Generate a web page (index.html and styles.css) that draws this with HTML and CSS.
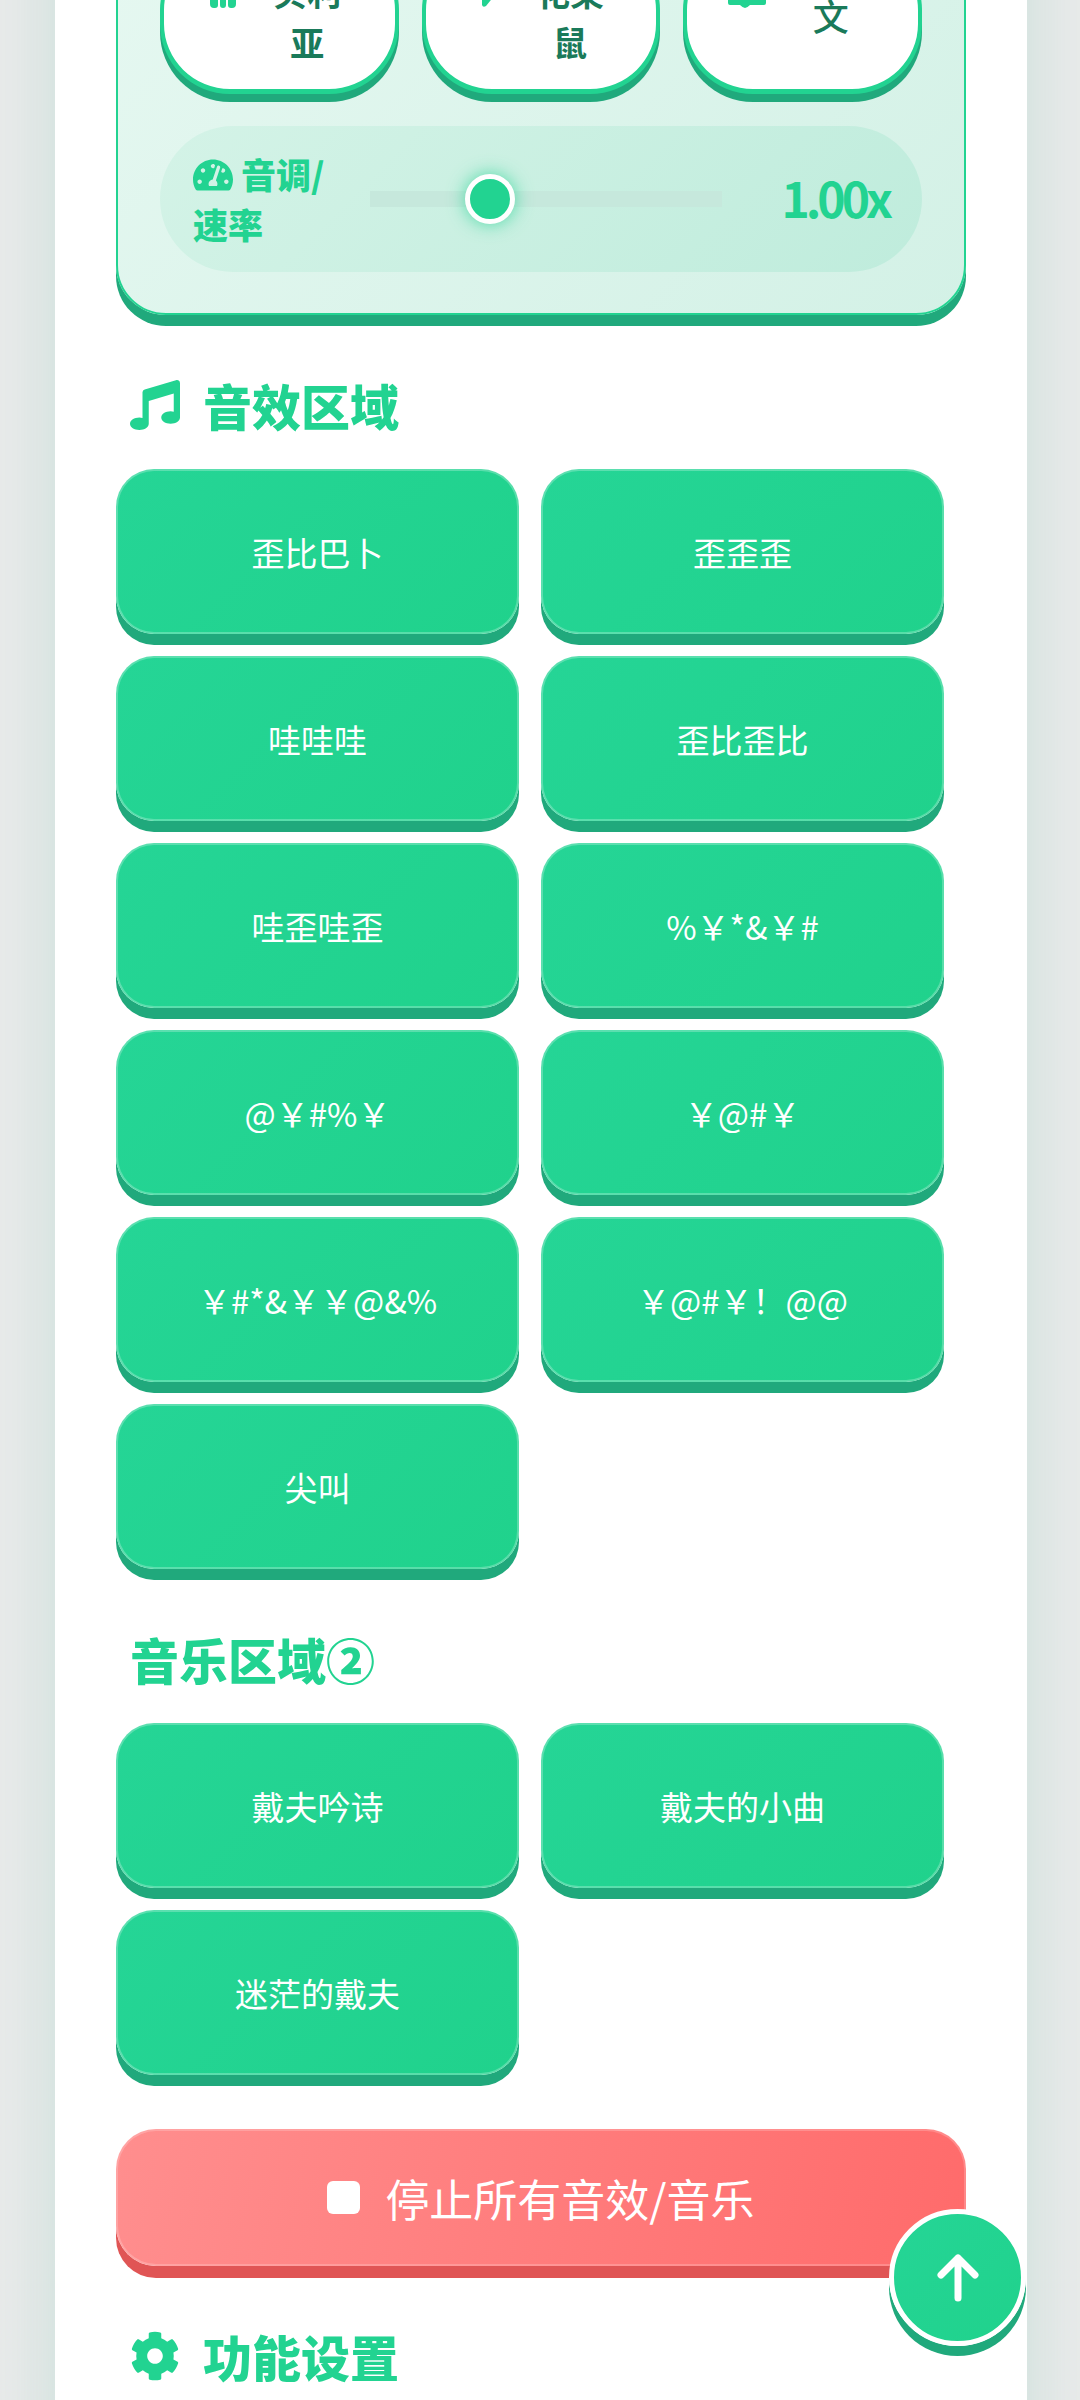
FILE: index.html
```html
<!DOCTYPE html>
<html lang="zh-CN">

<head>
  <meta charset="UTF-8">
  <meta name="viewport" content="width=device-width, initial-scale=1.0">
  <title>音效板</title>
  <link rel="stylesheet" href="styles.css">
</head>

<body>
  <div class="app">
    <div class="voice-panel">
      <div class="voices">
        <div class="voice-tile voice-tile-a">
          <svg class="voice-icon voice-icon-a" viewBox="0 0 26 34"><path d="M0 4h26v26q0 4-4 4h-1q-3 0-3-3v-7h-2v7q0 3-3 3t-3-3v-7H8v7q0 3-3 3H4q-4 0-4-4z" /></svg>
          <span class="voice-name">贝利亚</span>
        </div>
        <div class="voice-tile voice-tile-b">
          <svg class="voice-icon voice-icon-b" viewBox="0 0 30 34"><path d="M0 0h30L4 32q-3 2-4-1z" /></svg>
          <span class="voice-name">花栗鼠</span>
        </div>
        <div class="voice-tile voice-tile-c">
          <svg class="voice-icon voice-icon-c" viewBox="0 0 38 34"><path d="M0 0h38v29q0 2-2 2H22q-3 3-5 3t-5-3H2q-2 0-2-2z" /></svg>
          <span class="voice-name voice-name-thin">文</span>
        </div>
      </div>
      <div class="pitch">
        <div class="pitch-label">
          <svg class="pitch-icon" viewBox="0 0 576 512"><path d="M288 32C128.94 32 0 160.94 0 320c0 52.8 14.25 102.26 39.06 144.8 5.61 9.62 16.3 15.2 27.44 15.2h443c11.14 0 21.83-5.58 27.44-15.2C561.75 422.26 576 372.8 576 320c0-159.06-128.94-288-288-288zm0 64c14.71 0 26.58 10.13 30.32 23.65-1.11 2.26-2.64 4.23-3.45 6.67l-9.22 27.67c-5.13 3.49-10.97 6.01-17.64 6.01-17.67 0-32-14.33-32-32S270.33 96 288 96zM96 384c-17.67 0-32-14.33-32-32s14.33-32 32-32 32 14.33 32 32-14.33 32-32 32zm48-160c-17.67 0-32-14.33-32-32s14.33-32 32-32 32 14.33 32 32-14.33 32-32 32zm246.77-72.41l-61.33 184C343.13 347.33 352 364.54 352 384c0 11.72-3.38 22.55-8.88 32H232.88c-5.5-9.45-8.88-20.28-8.88-32 0-33.94 26.5-61.43 59.9-63.59l61.34-184.01c4.17-12.56 17.73-19.45 30.36-15.17 12.57 4.19 19.35 17.79 15.17 30.36zm14.66 57.2l15.52-46.55c3.47-1.29 7.13-2.23 11.05-2.23 17.67 0 32 14.33 32 32s-14.33 32-32 32c-11.38-.01-20.89-6.28-26.57-15.22zM480 384c-17.67 0-32-14.33-32-32s14.33-32 32-32 32 14.33 32 32-14.33 32-32 32z" /></svg>
          音调/<br>速率
        </div>
        <div class="pitch-track">
          <div class="pitch-thumb" style="left: 34.1%"></div>
        </div>
        <div class="pitch-value">1.00x</div>
      </div>
    </div>

    <h2 class="section-title">
      <svg class="title-icon" viewBox="0 0 512 512"><path d="M470.38 1.51L150.41 96A32 32 0 0 0 128 126.51v261.41A139 139 0 0 0 96 384c-53 0-96 28.66-96 64s43 64 96 64 96-28.66 96-64V214.32l256-75v184.61a138.4 138.4 0 0 0-32-3.93c-53 0-96 28.66-96 64s43 64 96 64 96-28.65 96-64V32a32 32 0 0 0-41.62-30.49z" /></svg>
      音效区域
    </h2>
    <div class="sound-grid">
      <button class="sound-btn">歪比巴卜</button>
      <button class="sound-btn">歪歪歪</button>
      <button class="sound-btn">哇哇哇</button>
      <button class="sound-btn">歪比歪比</button>
      <button class="sound-btn">哇歪哇歪</button>
      <button class="sound-btn">%￥*&amp;￥#</button>
      <button class="sound-btn">@￥#%￥</button>
      <button class="sound-btn">￥@#￥</button>
      <button class="sound-btn">￥#*&amp;￥￥@&amp;%</button>
      <button class="sound-btn">￥@#￥！@@</button>
      <button class="sound-btn">尖叫</button>
    </div>

    <h2 class="section-title">音乐区域②</h2>
    <div class="sound-grid">
      <button class="sound-btn">戴夫吟诗</button>
      <button class="sound-btn">戴夫的小曲</button>
      <button class="sound-btn">迷茫的戴夫</button>
    </div>

    <button class="stop-btn"><span class="stop-icon"></span>停止所有音效/音乐</button>

    <h2 class="section-title section-title-last">
      <svg class="title-icon" viewBox="0 0 512 512"><path d="M487.4 315.7l-42.6-24.6c4.3-23.2 4.3-47 0-70.2l42.6-24.6c4.9-2.8 7.1-8.6 5.5-14-11.1-35.6-30-67.8-54.7-94.6-3.8-4.1-10-5.1-14.8-2.3L380.8 110c-17.9-15.4-38.5-27.3-60.8-35.1V25.8c0-5.6-3.9-10.5-9.4-11.7-36.7-8.2-74.3-7.8-109.2 0-5.5 1.2-9.4 6.1-9.4 11.7V75c-22.2 7.9-42.8 19.8-60.8 35.1L88.7 85.5c-4.9-2.8-11-1.9-14.8 2.3-24.7 26.7-43.6 58.9-54.7 94.6-1.7 5.4.6 11.2 5.5 14L67.3 221c-4.3 23.2-4.3 47 0 70.2l-42.6 24.6c-4.9 2.8-7.1 8.6-5.5 14 11.1 35.6 30 67.8 54.7 94.6 3.8 4.1 10 5.1 14.8 2.3l42.6-24.6c17.9 15.4 38.5 27.3 60.8 35.1v49.2c0 5.6 3.9 10.5 9.4 11.7 36.7 8.2 74.3 7.8 109.2 0 5.5-1.2 9.4-6.1 9.4-11.7v-49.2c22.2-7.9 42.8-19.8 60.8-35.1l42.6 24.6c4.9 2.8 11 1.9 14.8-2.3 24.7-26.7 43.6-58.9 54.7-94.6 1.5-5.5-.7-11.3-5.6-14.1zM256 336c-44.1 0-80-35.9-80-80s35.9-80 80-80 80 35.9 80 80-35.9 80-80 80z" /></svg>
      功能设置
    </h2>
  </div>

  <button class="top-btn">
    <svg class="top-arrow" viewBox="0 0 42 48"><path d="M21 4v40M4 21 21 4l17 17" /></svg>
  </button>
</body>

</html>
```

FILE: styles.css
```css
:root {
  --green: #22d391;
  --green-dark: #20a97c;
  --tile-text: #1a7a5a;
}

* {
  font-family: "Noto Sans CJK SC", "Noto Sans", sans-serif;
  box-sizing: border-box;
}

body {
  margin: 0;
  height: 2400px;
  overflow: hidden;
  background-color: #e8eaea;
}

.app {
  width: 972px;
  height: 2600px;
  margin: -102px 0 0 55px;
  padding: 0 61px;
  background-color: #fff;
  box-shadow: 0 0 60px rgba(30, 160, 120, 0.14);
}

.voice-panel {
  padding: 40px 42px 41px;
  border: 2px solid var(--green);
  border-radius: 50px;
  background: linear-gradient(135deg, #e6f8f1, #d3f1e6);
  box-shadow: 0 11px 0 var(--green-dark);
}

.voices {
  display: grid;
  grid-template-columns: repeat(3, 1fr);
  gap: 23px;
}

.voice-tile {
  height: 154px;
  display: flex;
  align-items: center;
  justify-content: center;
  border: 4px solid var(--green);
  border-bottom-width: 5px;
  border-radius: 70px;
  background-color: #fff;
  box-shadow: 0 8px 0 var(--green-dark);
}

.voice-tile-a {
  gap: 37px;
  padding-right: 7px;
}

.voice-tile-b {
  gap: 24px;
  padding-left: 4px;
}

.voice-tile-c {
  gap: 31px;
  padding-right: 13px;
}

.voice-icon {
  fill: var(--green);
  height: 34px;
  margin-bottom: 52px;
}

.voice-icon-a {
  width: 26px;
}

.voice-icon-b {
  width: 30px;
}

.voice-icon-c {
  width: 38px;
}

.voice-name {
  width: 68px;
  font-size: 34px;
  font-weight: 700;
  line-height: 50px;
  text-align: center;
  color: var(--tile-text);
}

.voice-name-thin {
  margin-bottom: 4px;
  font-size: 36px;
  font-weight: 500;
}

.pitch {
  height: 146px;
  margin-top: 32px;
  padding: 0 33px;
  display: flex;
  align-items: center;
  border-radius: 73px;
  background: linear-gradient(135deg, #d4f3e7, #bfecdc);
}

.pitch-label {
  width: 177px;
  font-size: 35px;
  font-weight: 900;
  line-height: 50px;
  color: var(--green);
}

.pitch-icon {
  width: 40px;
  height: 36px;
  fill: var(--green);
  vertical-align: -4px;
}

.pitch-track {
  position: relative;
  width: 352px;
  height: 16px;
  background-color: #c6e8dc;
}

.pitch-thumb {
  position: absolute;
  top: 50%;
  width: 50px;
  height: 50px;
  border: 5px solid #fff;
  border-radius: 50%;
  background-color: var(--green);
  box-shadow: 0 0 18px rgba(34, 211, 145, 0.75);
  transform: translate(-50%, -50%);
}

.pitch-value {
  margin-bottom: 4px;
  margin-left: auto;
  font-size: 48px;
  font-weight: 700;
  letter-spacing: -4px;
  color: var(--green);
}

.section-title {
  height: 60px;
  margin: 60px 0 34px;
  padding-left: 14px;
  display: flex;
  align-items: center;
  gap: 23px;
  font-size: 49px;
  font-weight: 900;
  line-height: 60px;
  color: var(--green);
}

.title-icon {
  width: 50px;
  height: 50px;
  fill: var(--green);
}

.sound-grid {
  width: 828px;
  display: grid;
  grid-template-columns: repeat(2, 1fr);
  gap: 22px;
}

.sound-btn {
  height: 165px;
  padding: 0;
  border: 2px solid rgba(255, 255, 255, 0.25);
  border-radius: 38px;
  background: linear-gradient(135deg, #25d596, #20d28c) border-box;
  box-shadow: 0 11px 0 var(--green-dark);
  font-size: 33px;
  color: #fff;
}

.stop-btn {
  width: 850px;
  height: 137px;
  margin-top: 54px;
  padding: 0;
  display: flex;
  align-items: center;
  justify-content: center;
  gap: 25px;
  border: 2px solid rgba(255, 255, 255, 0.2);
  border-radius: 40px;
  background: linear-gradient(100deg, #ff8e8e, #ff6b6b) border-box;
  box-shadow: 0 12px 0 #e05555;
  font-size: 44px;
  color: #fff;
}

.stop-icon {
  width: 33px;
  height: 33px;
  border-radius: 6px;
  background-color: #fff;
}

.section-title-last {
  margin-top: 60px;
}

.top-btn {
  position: fixed;
  right: 54px;
  bottom: 54px;
  width: 137px;
  height: 137px;
  padding: 0;
  display: flex;
  align-items: center;
  justify-content: center;
  border: 5px solid #fff;
  border-radius: 50%;
  background: linear-gradient(135deg, #25d596, #20d28c);
  box-shadow: 0 10px 0 var(--green-dark);
}

.top-arrow {
  width: 42px;
  height: 48px;
  fill: none;
  stroke: #fff;
  stroke-width: 7;
  stroke-linecap: round;
  stroke-linejoin: round;
}
```
